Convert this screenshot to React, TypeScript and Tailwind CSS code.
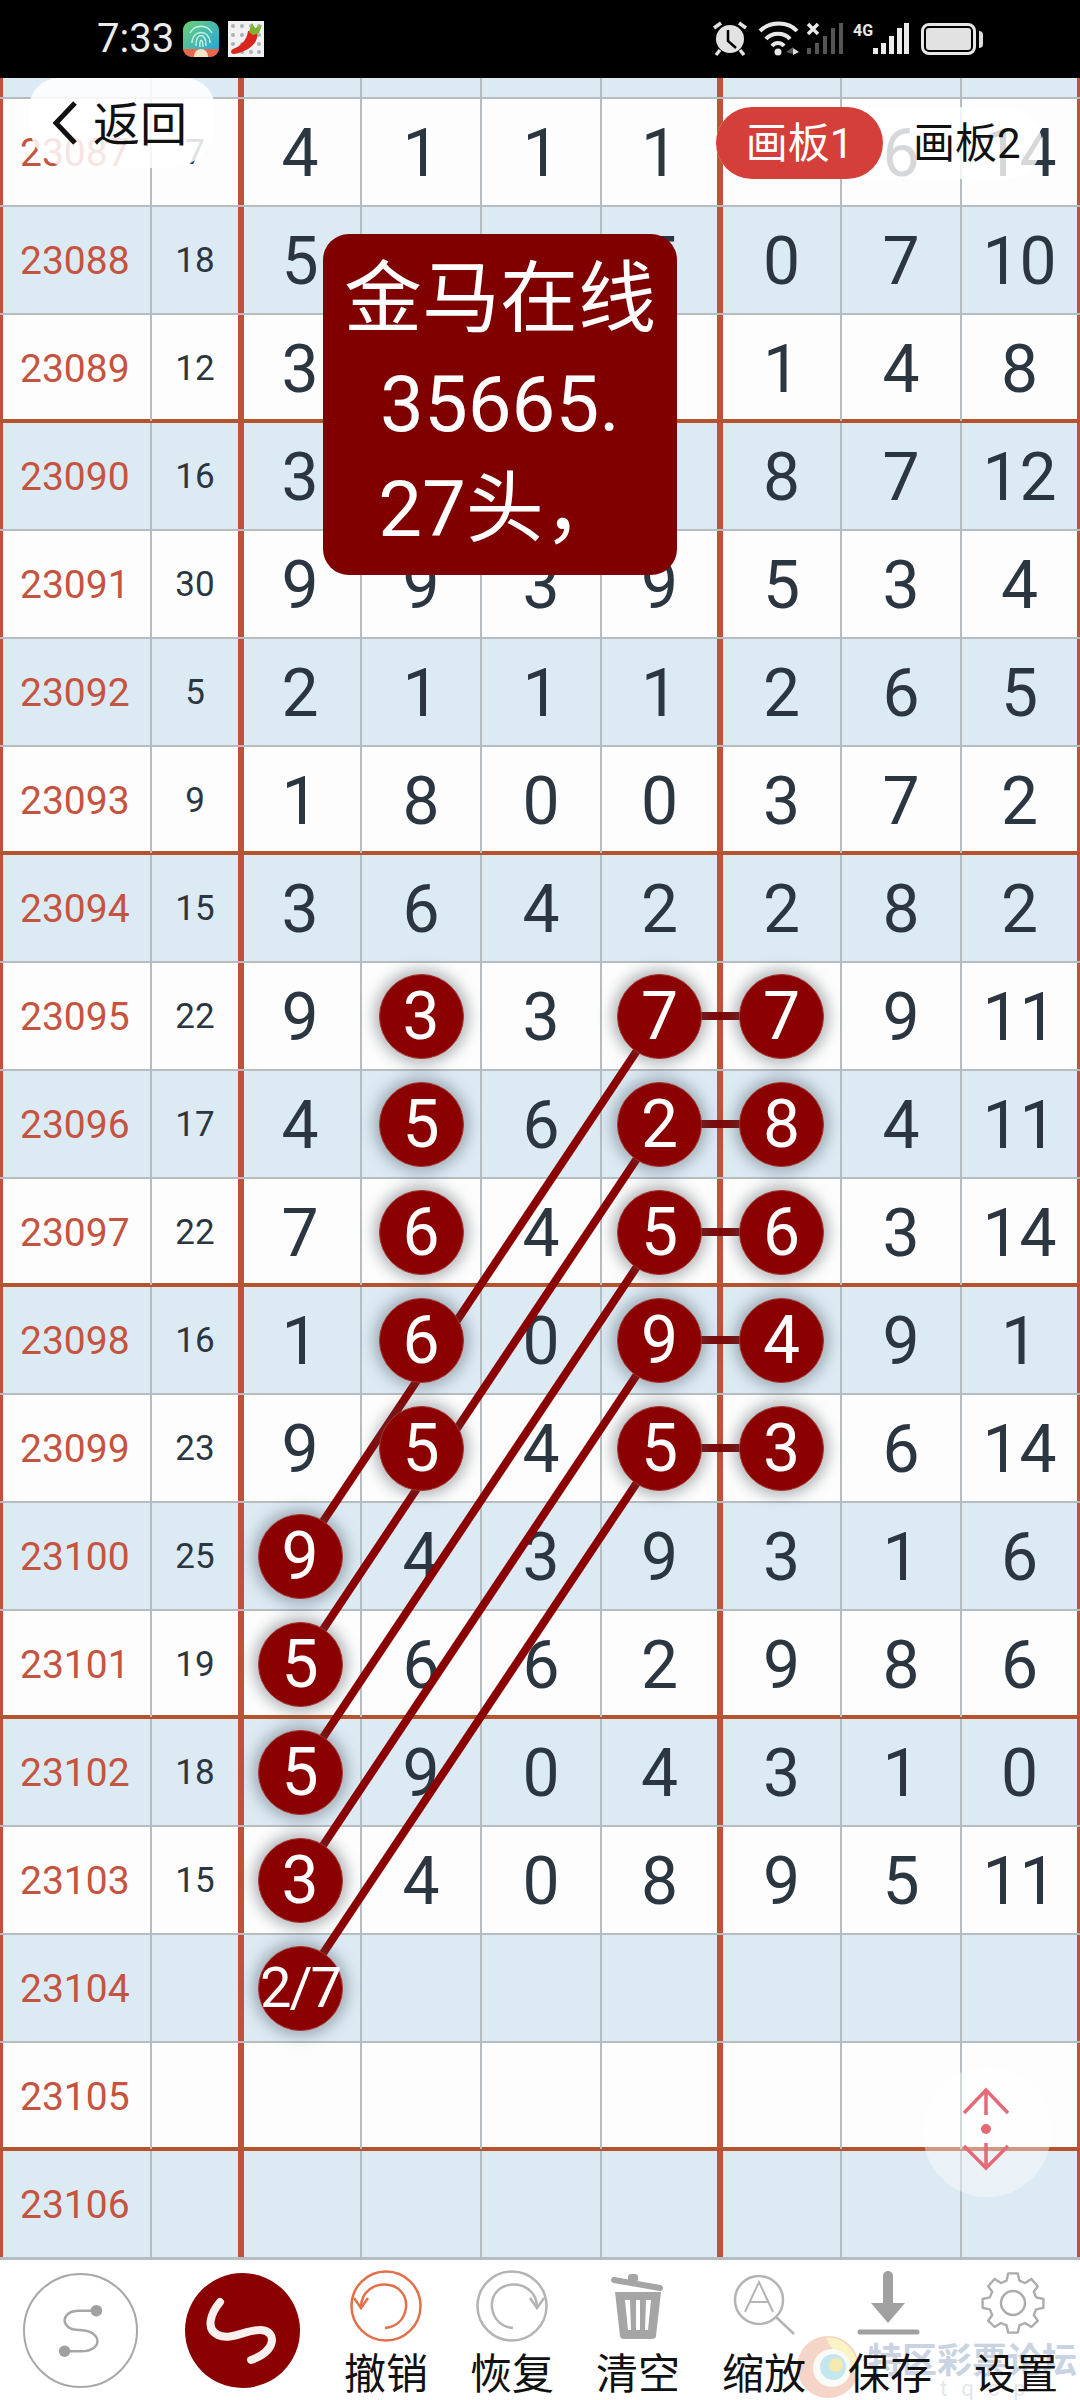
const sansCjk = "font-['Roboto','Noto_Sans_CJK_SC',sans-serif]";

type Row = [string, string, string[]];

// a leading * means the number is picked on the board (round marker)
const rows: Row[] = [
  ["23087", "7", ["4", "1", "1", "1", "", "6", "14"]],
  ["23088", "18", ["5", "", "", "5", "0", "7", "10"]],
  ["23089", "12", ["3", "", "", "", "1", "4", "8"]],
  ["23090", "16", ["3", "", "", "", "8", "7", "12"]],
  ["23091", "30", ["9", "9", "3", "9", "5", "3", "4"]],
  ["23092", "5", ["2", "1", "1", "1", "2", "6", "5"]],
  ["23093", "9", ["1", "8", "0", "0", "3", "7", "2"]],
  ["23094", "15", ["3", "6", "4", "2", "2", "8", "2"]],
  ["23095", "22", ["9", "*3", "3", "*7", "*7", "9", "11"]],
  ["23096", "17", ["4", "*5", "6", "*2", "*8", "4", "11"]],
  ["23097", "22", ["7", "*6", "4", "*5", "*6", "3", "14"]],
  ["23098", "16", ["1", "*6", "0", "*9", "*4", "9", "1"]],
  ["23099", "23", ["9", "*5", "4", "*5", "*3", "6", "14"]],
  ["23100", "25", ["*9", "4", "3", "9", "3", "1", "6"]],
  ["23101", "19", ["*5", "6", "6", "2", "9", "8", "6"]],
  ["23102", "18", ["*5", "9", "0", "4", "3", "1", "0"]],
  ["23103", "15", ["*3", "4", "0", "8", "9", "5", "11"]],
  ["23104", "", ["*2/7", "", "", "", "", "", ""]],
  ["23105", "", ["", "", "", "", "", "", ""]],
  ["23106", "", ["", "", "", "", "", "", ""]],
];

const rowY = (i: number) => 20 + i * 108 + 54;

// diagonal links: row of the right end -> row of the left end
const diagonals: [number, number][] = [
  [8, 13],
  [9, 14],
  [10, 15],
  [11, 16],
  [12, 17],
];
const links = [8, 9, 10, 11, 12];

function Cell({ value, index }: { value: string; index: number }) {
  const marked = value.startsWith("*");
  const text = marked ? value.slice(1) : value;
  const right = index === 3 ? "border-r-[6px] border-r-[#c0523a]" : index === 6 ? "border-r-[3px] border-r-[#c0523a]" : "border-r-2 border-r-[#b5bdc2]";
  return (
    <div className={`flex items-center justify-center ${right} ${index === 0 ? "pr-[4px]" : ""}`}>
      {marked ? (
        <div
          className={`relative z-10 flex h-[85px] w-[85px] items-center justify-center rounded-full border border-[#a8342c] bg-[#8b0000] text-white shadow-[0_0_14px_5px_rgba(70,80,90,0.4)] ${
            text.length > 1 ? "text-[56px] tracking-[-2px]" : "text-[66px]"
          }`}
        >
          {text}
        </div>
      ) : (
        <span className="pt-[3px] text-[66px] font-normal text-[#2b3640]">{text}</span>
      )}
    </div>
  );
}

function TableRow({ row, index }: { row: Row; index: number }) {
  const thick = (index + 1) % 4 === 0;
  const top = thick ? "-mt-[2px] h-[110px] border-t-4 border-t-[#b5532c]" : "h-[108px] border-t-2 border-t-[#b5bdc2]";
  const bg = index % 2 === 0 ? "bg-[#fdfdfd]" : "bg-[#dceaf4]";
  return (
    <div className={`grid grid-cols-[152px_92px_118px_120px_120px_121px_119px_120px_118px] ${top} ${bg}`}>
      <div className="flex items-center border-r-2 border-l-[3px] border-r-[#b5bdc2] border-l-[#c0523a] pt-[3px] pl-[17px] text-[39px] text-[#c5533f]">
        {row[0]}
      </div>
      <div className="flex items-center justify-center border-r-[6px] border-r-[#c0523a] pt-[3px] text-[35px] text-[#2b3640]">
        {row[1]}
      </div>
      {row[2].map((v, i) => (
        <Cell key={i} value={v} index={i} />
      ))}
    </div>
  );
}

function StatusBar() {
  return (
    <div className="flex h-[78px] items-center bg-black pl-[97px] text-[#ececec]">
      <span className="w-[78px] text-[40px] leading-none">7:33</span>
      <div className="ml-[8px] flex h-[36px] w-[36px] flex-col overflow-hidden rounded-[9px] bg-gradient-to-br from-[#6ccf6e] to-[#1e9fe0]">
        <svg viewBox="0 0 36 28" className="h-[28px] w-[36px]" fill="none" stroke="#c9f3e4" strokeWidth="1.4">
          <path d="M9 22 C9 8 27 8 27 22" />
          <path d="M13 25 C12 11 24 11 23 25" />
          <path d="M17 26 C16 17 20 17 20 26" />
          <path d="M7 12 C12 3 24 3 29 12" />
        </svg>
        <div className="flex h-[8px] items-center justify-center bg-[#e8664a]">
          <div className="h-[8px] w-[14px] rounded-t-full bg-[#f7e3c8]" />
        </div>
      </div>
      <svg viewBox="0 0 36 36" className="ml-[9px] h-[36px] w-[36px]">
        <rect width="36" height="36" fill="#f1f1f1" />
        {[5, 14, 23, 31].map((x) =>
          [5, 14, 23, 31].map((y) => <circle key={`${x}-${y}`} cx={x} cy={y} r="2" fill="#a9b2bc" />),
        )}
        <path d="M28 9 C33 18 24 30 6 33 C3 33 2 30 5 28 C13 25 19 19 20 10 Z" fill="#d9261c" />
        <path d="M21 11 L24 2 L27 7 L34 4 L31 12 L25 14 Z" fill="#7cb32f" />
      </svg>
      <div className="flex-1" />
      {/* viewBox is in page px: x-712, y-19 */}
      <svg viewBox="0 0 200 40" className="h-[40px] w-[200px]">
        {/* alarm */}
        <circle cx="18" cy="20" r="14" fill="#e2e2e2" />
        <path d="M16 11 V22 L24 29" stroke="#000" strokeWidth="2.5" fill="none" />
        <path d="M2 9 L9 4 M34 9 L27 4 M8 31 L4 36 M28 31 L32 36" stroke="#e2e2e2" strokeWidth="3.5" fill="none" />
        {/* wifi */}
        <path d="M48 12 C58 2 76 2 85 12 M54 20 C60 13 72 13 78 20 M60 27 C63 23 69 23 72 27" stroke="#e8e8e8" strokeWidth="4" fill="none" />
        <circle cx="66" cy="33" r="3.5" fill="#e8e8e8" />
        <path d="M74 33 L81 28 V35 Z" fill="#555" />
        <path d="M81 29 L87 33 L81 36 Z" fill="#ddd" />
        {/* signal off */}
        <path d="M96 5 L106 15 M106 5 L96 15" stroke="#e8e8e8" strokeWidth="3.5" />
        <g fill="#555">
          <rect x="95" y="29" width="4" height="6" />
          <rect x="103" y="24" width="4" height="11" />
          <rect x="111" y="17" width="4" height="18" />
          <rect x="119" y="9" width="4" height="26" />
          <rect x="127" y="4" width="4" height="31" />
        </g>
        {/* 4G */}
        <text x="141" y="17" fontSize="16" fontWeight="700" fill="#e8e8e8" fontFamily="Roboto, sans-serif">4G</text>
        <g fill="#ececec">
          <rect x="161" y="29" width="5" height="6" />
          <rect x="169" y="24" width="5" height="11" />
          <rect x="177" y="17" width="5" height="18" />
          <rect x="185" y="9" width="5" height="26" />
          <rect x="192" y="4" width="5" height="31" />
        </g>
      </svg>
      <div className="mr-[97px] ml-[9px] flex items-center">
        <div className="h-[32px] w-[55px] rounded-[8px] border-[3px] border-[#e6e6e6] p-[2px]">
          <div className="h-full w-full rounded-[3px] bg-[#e2e2e2]" />
        </div>
        <div className="ml-[3px] h-[17px] w-[4px] rounded-r bg-[#dcdcdc]" />
      </div>
    </div>
  );
}

function SwitchBar() {
  return (
    <div className="absolute top-[107px] left-[716px] flex h-[72px] w-[326px] items-center rounded-full bg-white/80 text-[42px] text-[#111]">
      <div className="flex h-full w-[167px] items-center justify-center rounded-full bg-[#d43f3a] text-white">画板1</div>
      <div className="ml-[30px]">画板2</div>
    </div>
  );
}

function Tool({ label, children }: { label: string; children: React.ReactNode }) {
  return (
    <div className="relative flex w-[126px] flex-col items-center pt-[10px]">
      <svg viewBox="0 0 80 72" className="h-[72px] w-[80px]" fill="none">
        {children}
      </svg>
      <span className="mt-[9px] text-[42px] leading-[48px] text-[#111]">{label}</span>
    </div>
  );
}

function Toolbar() {
  return (
    <div className="relative flex h-[140px] bg-white pl-[23px]">
      {/* site watermark */}
      <svg viewBox="0 0 64 64" className="absolute top-[75px] left-[796px] h-[64px] w-[64px]" fill="none">
        <circle cx="32" cy="32" r="31" fill="#f5d5c8" />
        <path d="M30 3 C50 1 64 20 62 40 C50 30 40 22 30 3" fill="#faf3c4" />
        <circle cx="36" cy="33" r="19" fill="#fafaf7" />
        <circle cx="37" cy="32" r="13" fill="#c4e6ee" />
        <circle cx="40" cy="30" r="7" fill="#f5e9ad" />
      </svg>
      <div className="absolute top-[80px] left-[867px] text-[35px] leading-[44px] font-bold whitespace-nowrap text-[#c9d3e1]">
        特区彩票论坛
      </div>
      <div className="absolute top-[112px] left-[940px] text-[22px] tracking-[14px] text-[#e2e7ee]">tqcp</div>

      <div className="relative mt-[13px] flex h-[115px] w-[115px] items-center justify-center rounded-full border-2 border-[#a8a8a8]">
        <svg viewBox="0 0 115 115" className="h-[115px] w-[115px]" fill="none">
          <path d="M74 37 H56 C36 37 36 57 56 57 C80 57 82 79 58 79 H41" stroke="#a6a6a6" strokeWidth="2.5" />
          <circle cx="74" cy="37" r="6" fill="#a0a0a0" />
          <circle cx="41" cy="79" r="6" fill="#a0a0a0" />
        </svg>
      </div>
      <div className="relative mt-[13px] ml-[47px] h-[115px] w-[115px] rounded-full bg-[#8b0000]">
        <svg viewBox="0 0 115 115" className="h-[115px] w-[115px]" fill="none">
          <path d="M35 29 C26 40 20 56 33 62 C46 68 62 56 76 57 C92 58 92 78 66 87" stroke="#f7f0ee" strokeWidth="8" strokeLinecap="round" />
        </svg>
      </div>
      <div className="ml-[23px] flex">
        <Tool label="撤销">
          <circle cx="40" cy="36" r="34.5" stroke="#e2704a" strokeWidth="2.5" />
          <path d="M15 36 C17 6 63 8 60 38 C58 50 50 57 39 58" stroke="#e2704a" strokeWidth="2.5" />
          <path d="M8 28 L15 38 L22 28" stroke="#e2704a" strokeWidth="2.5" />
        </Tool>
        <Tool label="恢复">
          <circle cx="40" cy="36" r="34.5" stroke="#b4b4b4" strokeWidth="2.5" />
          <path d="M65 36 C63 6 17 8 20 38 C22 50 30 57 41 58" stroke="#b4b4b4" strokeWidth="2.5" />
          <path d="M58 28 L65 38 L72 28" stroke="#b4b4b4" strokeWidth="2.5" />
        </Tool>
        <Tool label="清空">
          <path d="M16 10 L62 18" stroke="#a5a5a5" strokeWidth="6" strokeLinecap="round" />
          <rect x="30" y="4" width="10" height="8" rx="3" fill="#a5a5a5" />
          <path fillRule="evenodd" d="M17 22 H63 L58 66 C58 68 56 69 54 69 H26 C24 69 22 68 22 66 Z M27 30 L30 60 H33 L32 30 Z M38 30 V60 H42 V30 Z M48 30 L47 60 H50 L53 30 Z" fill="#a5a5a5" />
        </Tool>
        <Tool label="缩放">
          <circle cx="35" cy="30" r="24" stroke="#b4b4b4" strokeWidth="2.5" />
          <path d="M21 42 L35 12 L49 42 M26 32 H44" stroke="#b4b4b4" strokeWidth="2" />
          <path d="M52 47 L70 64" stroke="#b4b4b4" strokeWidth="2.5" />
        </Tool>
        <Tool label="保存">
          <path d="M38 6 V34" stroke="#a0a0a0" strokeWidth="10" strokeLinecap="round" />
          <path d="M21 33 H55 L38 53 Z" fill="#a0a0a0" />
          <path d="M10 62 H67" stroke="#a0a0a0" strokeWidth="5" strokeLinecap="round" />
        </Tool>
        <Tool label="设置">
          <path
            d="M34 4 H46 L48 13 L55 16 L63 11 L71 20 L66 27 L69 34 L78 36 V47 L69 49 L66 56 L71 63 L63 71 L55 66 L48 69 L46 78 H34 L32 69 L25 66 L17 71 L9 63 L14 56 L11 49 L2 47 V36 L11 34 L14 27 L9 20 L17 11 L25 16 L32 13 Z"
            stroke="#acacac"
            strokeWidth="3"
            strokeLinejoin="round"
            transform="translate(37 33) scale(0.8) translate(-40 -41)"
          />
          <circle cx="37" cy="33" r="12" stroke="#acacac" strokeWidth="2.5" />
        </Tool>
      </div>
    </div>
  );
}

export default function App() {
  return (
    <div className={`relative flex h-[2400px] w-[1080px] flex-col overflow-hidden bg-white ${sansCjk}`}>
      <StatusBar />
      <div className="relative">
        <div className="grid h-[19px] grid-cols-[152px_92px_118px_120px_120px_121px_119px_120px_118px] bg-[#dceaf4]">
          <div className="border-r-2 border-l-[3px] border-r-[#b5bdc2] border-l-[#c0523a]" />
          <div className="border-r-[6px] border-r-[#c0523a]" />
          {[0, 1, 2, 3, 4, 5, 6].map((i) => (
            <div
              key={i}
              className={i === 3 ? "border-r-[6px] border-r-[#c0523a]" : i === 6 ? "border-r-[3px] border-r-[#c0523a]" : "border-r-2 border-r-[#b5bdc2]"}
            />
          ))}
        </div>
        {rows.map((row, i) => (
          <TableRow key={row[0]} row={row} index={i} />
        ))}
        <svg viewBox="0 0 1080 2180" className="pointer-events-none absolute top-0 left-0 h-[2180px] w-[1080px]">
          {diagonals.map(([a, b]) => (
            <line key={a} x1="660" y1={rowY(a)} x2="300" y2={rowY(b)} stroke="#8b0000" strokeWidth="8" />
          ))}
          {links.map((r) => (
            <line key={r} x1="660" y1={rowY(r)} x2="780" y2={rowY(r)} stroke="#7d0a0a" strokeWidth="8" />
          ))}
        </svg>
      </div>
      <div className="h-[3px] bg-[#b5bdc2]" />
      <Toolbar />

      {/* back button */}
      <div className="absolute top-[78px] left-[29px] flex h-[90px] w-[186px] items-center rounded-t-[30px] rounded-b-[45px] bg-white/85 pl-[23px] text-[47px] text-[#111]">
        <svg viewBox="0 0 26 44" className="h-[44px] w-[26px]" fill="none">
          <path d="M23 2 L4 22 L23 42" stroke="#111" strokeWidth="5" />
        </svg>
        <span className="ml-[15px] pt-[5px]">返回</span>
      </div>

      <SwitchBar />

      {/* notice */}
      <div className="absolute top-[234px] left-[323px] flex h-[341px] w-[354px] flex-col items-center justify-center rounded-[26px] bg-[#800000] text-center text-[78px] leading-[105px] text-white">
        <div>金马在线</div>
        <div>35665.</div>
        <div>27头，</div>
      </div>

      {/* scroll handle */}
      <div className="absolute top-[2067px] left-[923px] h-[130px] w-[128px] rounded-full bg-white/40">
        <svg viewBox="0 0 128 130" className="h-[130px] w-[128px]" fill="none">
          <path d="M41 46 L63 23 L85 46 M63 23 V48 M41 79 L63 101 L85 79 M63 76 V101" stroke="#e56a78" strokeWidth="3.5" />
          <circle cx="63" cy="62" r="5" fill="#e56a78" />
        </svg>
      </div>
    </div>
  );
}
